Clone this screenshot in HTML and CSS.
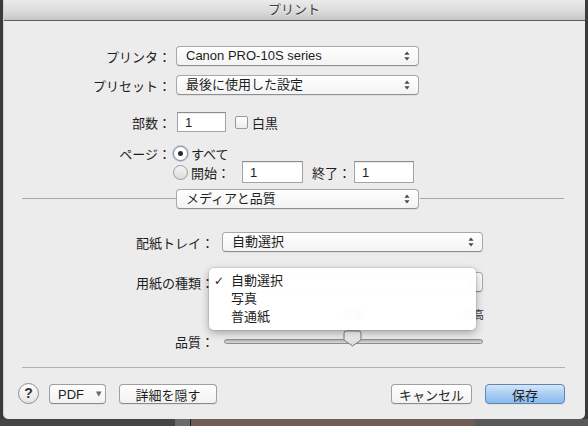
FILE: index.html
```html
<!DOCTYPE html>
<html lang="ja">
<head>
<meta charset="utf-8">
<title>プリント</title>
<link rel="stylesheet" href="styles.css">
</head>
<body>
<div class="dialog">
  <div class="titlebar">プリント</div>

  <div class="row r-printer">
    <div class="lbl1">プリンタ：</div>
    <div class="select s1"><span class="stext">Canon PRO-10S series</span><svg class="arr" width="6" height="10" viewBox="0 0 6 10"><path d="M3 0.5 L5.6 3.8 H0.4 Z M3 9.5 L5.6 6.2 H0.4 Z" fill="#4a4a4a"/></svg></div>
  </div>

  <div class="row r-preset">
    <div class="lbl1">プリセット：</div>
    <div class="select s1"><span class="stext">最後に使用した設定</span><svg class="arr" width="6" height="10" viewBox="0 0 6 10"><path d="M3 0.5 L5.6 3.8 H0.4 Z M3 9.5 L5.6 6.2 H0.4 Z" fill="#4a4a4a"/></svg></div>
  </div>

  <div class="row r-copies">
    <div class="lbl1">部数：</div>
    <div class="tinput copies">1</div>
    <div class="checkbox"></div>
    <div class="ctext">白黒</div>
  </div>

  <div class="row r-pages1">
    <div class="lbl1">ページ：</div>
    <div class="radio on"><div class="dot"></div></div>
    <div class="rtext">すべて</div>
  </div>

  <div class="row r-pages2">
    <div class="lbl1"></div>
    <div class="radio"></div>
    <div class="rtext">開始：</div>
    <div class="tinput from">1</div>
    <div class="totext">終了：</div>
    <div class="tinput to">1</div>
  </div>

  <div class="row r-sep">
    <div class="line left"></div>
    <div class="select s0"><span class="stext">メディアと品質</span><svg class="arr" width="6" height="10" viewBox="0 0 6 10"><path d="M3 0.5 L5.6 3.8 H0.4 Z M3 9.5 L5.6 6.2 H0.4 Z" fill="#4a4a4a"/></svg></div>
    <div class="line right"></div>
  </div>

  <div class="row r-tray">
    <div class="lbl2">配紙トレイ：</div>
    <div class="select s2"><span class="stext">自動選択</span><svg class="arr" width="6" height="10" viewBox="0 0 6 10"><path d="M3 0.5 L5.6 3.8 H0.4 Z M3 9.5 L5.6 6.2 H0.4 Z" fill="#4a4a4a"/></svg></div>
  </div>

  <div class="row r-paper">
    <div class="lbl2">用紙の種類：</div>
    <div class="select s2"><span class="stext"></span><svg class="arr" width="6" height="10" viewBox="0 0 6 10"><path d="M3 0.5 L5.6 3.8 H0.4 Z M3 9.5 L5.6 6.2 H0.4 Z" fill="#4a4a4a"/></svg></div>
  </div>

  <div class="row r-slabels">
    <span class="sl-mid">標準</span>
    <span class="sl-high">最高</span>
  </div>

  <div class="row r-quality">
    <div class="lbl2">品質：</div>
    <div class="slider">
      <div class="track"></div>
      <svg class="thumb" width="19" height="17" viewBox="0 0 19 17"><defs><linearGradient id="tg" x1="0" y1="0" x2="0" y2="1"><stop offset="0" stop-color="#fdfdfd"/><stop offset="1" stop-color="#d6d6d6"/></linearGradient></defs><path d="M3.5 1 H15.5 Q18 1 18 3.5 V10 L9.5 16 L1 10 V3.5 Q1 1 3.5 1 Z" fill="url(#tg)" stroke="#7c7c7c" stroke-width="1"/></svg>
    </div>
  </div>

  <div class="hr"></div>

  <div class="row r-buttons">
    <div class="help">?</div>
    <div class="btn pdf">PDF<span class="caret">▼</span></div>
    <div class="btn details">詳細を隠す</div>
    <div class="spacer"></div>
    <div class="btn cancel">キャンセル</div>
    <div class="btn save">保存</div>
  </div>

  <div class="menu">
    <div class="mitem"><span class="check">✓</span>自動選択</div>
    <div class="mitem">写真</div>
    <div class="mitem">普通紙</div>
  </div>
</div>
<div class="strip">
  <div class="st a"></div>
  <div class="st b"></div>
  <div class="st c"></div>
  <div class="st d"></div>
</div>
</body>
</html>
```

FILE: styles.css
```css
html, body {
  margin: 0;
  padding: 0;
}
body {
  width: 588px;
  height: 426px;
  overflow: hidden;
  background: #3a3a3a;
  font-family: "Liberation Sans", "Noto Sans CJK JP", sans-serif;
  font-size: 13px;
  color: #1e1e1e;
}
.dialog {
  position: relative;
  margin-left: 3px;
  width: 582px;
  height: 419px;
  box-sizing: border-box;
  background: #ececec;
  border-radius: 0 0 5px 5px;
  border-left: 1px solid #d0d0d0;
  overflow: hidden;
}
.titlebar {
  height: 20px;
  line-height: 20px;
  border-bottom: 1px solid #5e5e5e;
  background: linear-gradient(#ebebeb, #d9d9d9 60%, #c6c6c6);
  text-align: center;
  color: #3d3d3d;
  text-shadow: 0 1px 0 rgba(255,255,255,0.6);
  font-size: 13px;
  margin-left: -1px;
}
.row {
  display: flex;
  align-items: center;
}
.lbl1 {
  width: 167px;
  flex: none;
  text-align: right;
}
.lbl2 {
  width: 210px;
  flex: none;
  text-align: right;
}
.select {
  height: 20px;
  box-sizing: border-box;
  display: flex;
  align-items: center;
  justify-content: space-between;
  padding: 0 8px 0 9px;
  background: linear-gradient(#ffffff, #f3f3f3);
  border: 1px solid #a8a8a8;
  border-bottom-color: #8f8f8f;
  border-radius: 4px;
  box-shadow: 0 1px 0 rgba(0,0,0,0.06);
  flex: none;
}
.stext {
  line-height: 18px;
  white-space: nowrap;
}
.arr {
  flex: none;
}
.s1 {
  width: 243px;
  margin-left: 5px;
}
.s0 {
  width: 243px;
}
.s2 {
  width: 261px;
  margin-left: 8px;
}
.r-printer { height: 20px; margin-top: 25px; }
.r-preset { height: 20px; margin-top: 9px; }
.r-copies { height: 20px; margin-top: 17px; }
.r-pages1 { height: 16px; margin-top: 13px; }
.r-pages2 { height: 22px; margin-top: 0; }
.r-sep { height: 21px; margin-top: 5px; padding-left: 18px; }
.r-tray { height: 20px; margin-top: 23px; }
.r-paper { height: 20px; margin-top: 20px; }
.r-slabels { height: 12px; margin-top: 16px; font-size: 11px; padding-left: 338px; width: 142px; }
.r-quality { height: 16px; margin-top: 13px; }
.r-buttons { height: 20px; margin-top: 16px; padding: 0 20px 0 14px; }

.tinput {
  box-sizing: border-box;
  background: #ffffff;
  border: 1px solid #a3a3a3;
  border-top-color: #8c8c8c;
  box-shadow: inset 0 1px 1px rgba(0,0,0,0.08);
  padding-left: 7px;
  line-height: 19px;
  flex: none;
}
.copies {
  width: 49px;
  height: 20px;
  margin-left: 6px;
}
.checkbox {
  width: 13px;
  height: 13px;
  box-sizing: border-box;
  margin-left: 9px;
  background: linear-gradient(#ffffff, #ededed);
  border: 1px solid #9a9a9a;
  border-radius: 2px;
}
.ctext {
  margin-left: 4px;
}
.radio {
  width: 15px;
  height: 15px;
  box-sizing: border-box;
  border-radius: 50%;
  border: 1px solid #9a9a9a;
  background: linear-gradient(#f4f4f4, #dcdcdc);
  margin-left: 2px;
  display: flex;
  align-items: center;
  justify-content: center;
  flex: none;
}
.radio.on {
  background: #ffffff;
  border-color: #8a8a8a;
  box-shadow: 0 0 0 1px rgba(120,160,220,0.45);
}
.dot {
  width: 5px;
  height: 5px;
  border-radius: 50%;
  background: #2a2a2a;
}
.rtext {
  margin-left: 3px;
}
.from {
  width: 61px;
  height: 22px;
  line-height: 21px;
  margin-left: 12px;
}
.totext {
  margin-left: 9px;
}
.to {
  width: 60px;
  height: 22px;
  line-height: 21px;
  margin-left: 3px;
}
.line {
  height: 1px;
  background: #a9a9a9;
}
.line.left {
  width: 154px;
}
.line.right {
  width: 144px;
  margin-left: 1px;
}
.sl-mid {
  color: #333;
}
.sl-high {
  margin-left: auto;
  color: #333;
}
.slider {
  position: relative;
  width: 259px;
  height: 16px;
  margin-left: 10px;
}
.track {
  margin-top: 6px;
  height: 5px;
  box-sizing: border-box;
  border: 1px solid #8c8c8c;
  border-radius: 3px;
  background: linear-gradient(#b4b4b4, #d8d8d8);
}
.thumb {
  position: absolute;
  left: 119px;
  top: -3px;
}
.hr {
  height: 1px;
  margin: 18px 20px 0 18px;
  background: #b2b2b2;
}
.help {
  width: 21px;
  height: 21px;
  box-sizing: border-box;
  border-radius: 50%;
  border: 1px solid #8d8d8d;
  background: linear-gradient(#ffffff, #e4e4e4);
  text-align: center;
  line-height: 19px;
  font-weight: bold;
  font-size: 14px;
  color: #333;
  flex: none;
  margin-top: -1px;
}
.btn {
  height: 20px;
  box-sizing: border-box;
  border: 1px solid #9f9f9f;
  border-bottom-color: #8a8a8a;
  border-radius: 4px;
  background: linear-gradient(#ffffff, #f2f2f2);
  box-shadow: 0 1px 0 rgba(0,0,0,0.05);
  display: flex;
  align-items: center;
  justify-content: center;
  flex: none;
}
.pdf {
  width: 57px;
  margin-left: 10px;
  justify-content: flex-start;
  padding-left: 8px;
}
.caret {
  font-size: 7px;
  margin-left: 12px;
  color: #666;
  font-family: "DejaVu Sans", sans-serif;
}
.details {
  width: 98px;
  margin-left: 13px;
}
.spacer {
  flex: 1;
}
.cancel {
  width: 81px;
}
.save {
  width: 80px;
  margin-left: 13px;
  border-color: #5d86b6;
  background: linear-gradient(#d5e7fb, #a9cdf3 50%, #88bbef);
}
.menu {
  position: absolute;
  left: 205px;
  top: 268px;
  width: 267px;
  height: 62px;
  box-sizing: border-box;
  padding-top: 4px;
  background: rgba(255,255,255,0.975);
  border-radius: 5px;
  box-shadow: 0 3px 9px rgba(0,0,0,0.3), 0 0 0 1px rgba(0,0,0,0.08);
}
.mitem {
  height: 18px;
  line-height: 18px;
  padding-left: 22px;
  position: relative;
}
.check {
  position: absolute;
  left: 5px;
  top: 0;
  font-family: "DejaVu Sans", sans-serif;
  font-size: 12px;
  font-weight: bold;
}
.strip {
  display: flex;
  height: 7px;
}
.st.a { width: 175px; background: #454545; }
.st.b { width: 15px; background: #6a6a6a; border-right: 1px solid #222; }
.st.c { width: 284px; background: #6e5b56; }
.st.d { flex: 1; background: #595959; }
```
